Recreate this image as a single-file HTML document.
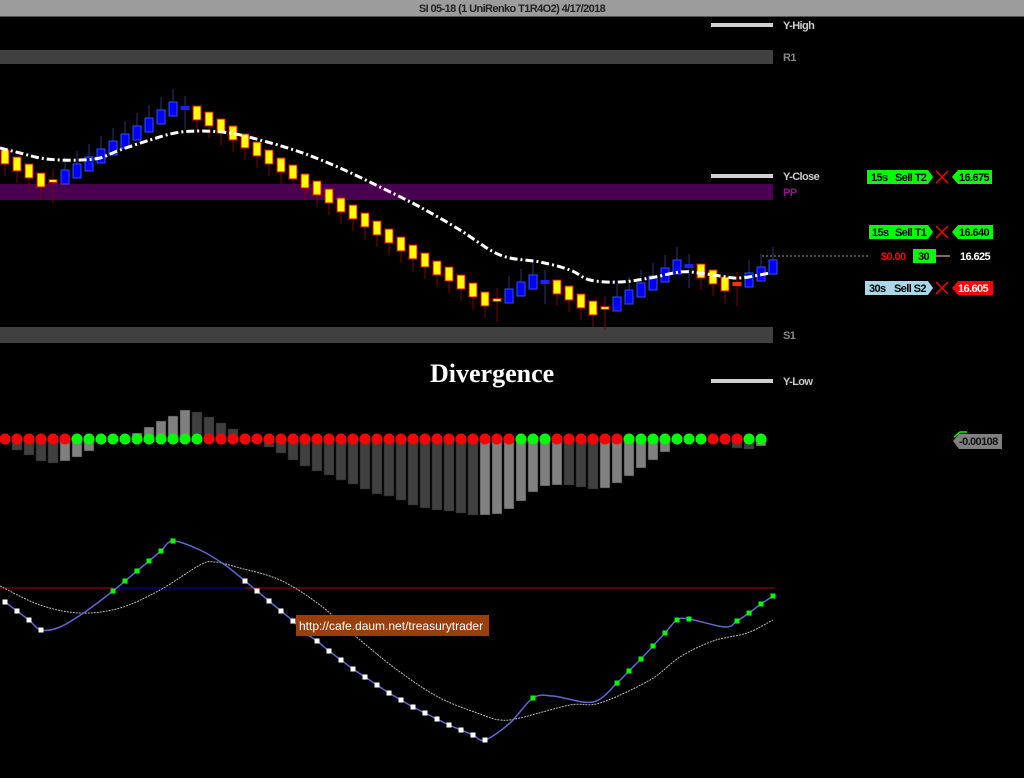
<!DOCTYPE html>
<html><head><meta charset="utf-8"><style>
html,body{margin:0;padding:0;background:#000;width:1024px;height:778px;overflow:hidden}
svg{display:block}
.lb{font-family:"Liberation Sans",sans-serif;font-weight:bold;font-size:11px;letter-spacing:-0.6px}
</style></head><body>
<svg id="s" width="1024" height="778" viewBox="0 0 1024 778" xmlns="http://www.w3.org/2000/svg">
<rect width="1024" height="778" fill="#000"/>
<rect x="0" y="0" width="1024" height="16" fill="#9c9c9c"/>
<rect x="0" y="16" width="1024" height="1" fill="#555"/>
<text x="512" y="12" text-anchor="middle" class="lb" fill="#222" font-size="11">SI 05-18 (1 UniRenko T1R4O2)  4/17/2018</text>
<rect x="0" y="50" width="773" height="14" fill="#404040"/>
<rect x="0" y="327" width="773" height="16" fill="#404040"/>
<rect x="0" y="184" width="773" height="16" fill="#4a0050"/>
<rect x="711" y="23" width="62" height="4" fill="#d0d0d0"/>
<rect x="711" y="174" width="62" height="4" fill="#d0d0d0"/>
<rect x="711" y="379" width="62" height="4" fill="#d0d0d0"/>
<g class="lb">
<text x="783" y="29" fill="#ccc">Y-High</text>
<text x="783" y="61" fill="#888">R1</text>
<text x="783" y="180" fill="#ccc">Y-Close</text>
<text x="783" y="196" fill="#8a1a8a">PP</text>
<text x="783" y="339" fill="#888">S1</text>
<text x="783" y="385" fill="#ccc">Y-Low</text>
</g>
<g id="cand"></g>
<path id="ma" fill="none" stroke="#fff" stroke-width="3" stroke-dasharray="8 3 2 3"/>
<line x1="762" y1="256" x2="868" y2="256" stroke="#999" stroke-dasharray="2 2"/>
<g class="lb">
<rect x="867" y="170" width="26" height="14" fill="#00ff00"/><text x="871" y="181" fill="#000">15s</text>
<polygon points="893,170 928,170 933,177 928,184 893,184" fill="#00ff00"/><text x="895" y="181" fill="#000">Sell T2</text>
<path d="M936,171 L948,183 M948,171 L936,183" stroke="#f00" stroke-width="1.5"/>
<polygon points="952,177 958,170 992,170 992,184 958,184" fill="#00ff00"/><text x="959" y="181" fill="#000">16.675</text>

<rect x="869" y="225" width="25" height="14" fill="#00ff00"/><text x="872" y="236" fill="#000">15s</text>
<polygon points="894,225 928,225 933,232 928,239 894,239" fill="#00ff00"/><text x="895" y="236" fill="#000">Sell T1</text>
<path d="M936,226 L948,238 M948,226 L936,238" stroke="#f00" stroke-width="1.5"/>
<polygon points="952,232 958,225 993,225 993,239 958,239" fill="#00ff00"/><text x="959" y="236" fill="#000">16.640</text>

<text x="881" y="260" fill="#f00">$0.00</text>
<rect x="913" y="249" width="23" height="14" fill="#00ff00"/><text x="918" y="260" fill="#000">30</text>
<line x1="936" y1="256" x2="950" y2="256" stroke="#b09070" stroke-width="1.5"/>
<text x="960" y="260" fill="#fff">16.625</text>

<rect x="865" y="281" width="28" height="14" fill="#a8d8ea"/><text x="869" y="292" fill="#000">30s</text>
<polygon points="893,281 928,281 933,288 928,295 893,295" fill="#a8d8ea"/><text x="894" y="292" fill="#000">Sell S2</text>
<path d="M936,282 L948,294 M948,282 L936,294" stroke="#f00" stroke-width="1.5"/>
<polygon points="952,288 958,281 993,281 993,295 958,295" fill="#ff0000"/><text x="958" y="292" fill="#fff">16.605</text>

<polygon points="953,441 959,434 1002,434 1002,449 959,449" fill="#808080"/><text x="959" y="445" fill="#111">-0.00108</text>
<path d="M954,437 L960,432 L967,432" stroke="#00ff00" stroke-width="1.5" fill="none"/>
</g>
<text x="430" y="382" font-family="'Liberation Serif',serif" font-weight="bold" font-size="26" fill="#fff">Divergence</text>
<g id="hist"></g>
<line x1="0" y1="588" x2="775" y2="588" stroke="#b00000" stroke-width="1"/>
<line x1="113" y1="588" x2="245" y2="588" stroke="#0000b0" stroke-width="1"/>
<path id="sig" fill="none" stroke="#bbb" stroke-width="1" stroke-dasharray="2 1"/>
<g id="osc"></g>
<rect x="296" y="615" width="193" height="21" fill="#9a3e0c"/>
<text x="299" y="630" font-family="'Liberation Sans',sans-serif" font-size="12" fill="#fff">http://cafe.daum.net/treasurytrader</text>
</svg>
<script>
var NS="http://www.w3.org/2000/svg";
function el(p,t,a){var e=document.createElementNS(NS,t);for(var k in a)e.setAttribute(k,a[k]);p.appendChild(e);return e;}
function cr(pts){var d='M'+pts[0][0]+','+pts[0][1];for(var i=0;i<pts.length-1;i++){var p0=pts[i-1]||pts[i],p1=pts[i],p2=pts[i+1],p3=pts[i+2]||p2;
d+=' C'+(p1[0]+(p2[0]-p0[0])/6)+','+(p1[1]+(p2[1]-p0[1])/6)+' '+(p2[0]-(p3[0]-p1[0])/6)+','+(p2[1]-(p3[1]-p1[1])/6)+' '+p2[0]+','+p2[1];}return d;}
document.getElementById('ma').setAttribute('d',cr([[0,148],[20,153],[40,158],[60,160],[80,160],[100,158],[120,150],[150,140],[175,133],[200,131],[230,133],[260,140],[300,152],[340,168],[380,187],[420,207],[460,230],[490,250],[510,258],[540,262],[570,270],[590,280],[620,282],[650,278],[680,272],[700,273],[720,276],[740,278],[770,273]]));
document.getElementById('sig').setAttribute('d',cr([[0,586],[40,605],[80,613],[120,608],[160,590],[200,565],[215,562],[240,568],[280,580],[320,605],[360,640],[400,672],[440,698],[480,714],[500,720],[520,718],[570,705],[600,703],[650,680],[680,657],[713,641],[747,633],[773,620]]));
var c=document.getElementById('cand');
var C=[[157,'y'],[164,'y'],[171,'y'],[180,'y'],[181,'dy'],[177,'b'],[171,'b'],[164,'b'],[156,'b'],[148,'b'],[141,'b'],[133,'b'],[125,'b'],[117,'b'],[109,'b'],[108,'db'],
[113,'y'],[119,'y'],[126,'y'],[133,'y'],[141,'y'],[149,'y'],[157,'y'],[165,'y'],[172,'y'],[181,'y'],[188,'y'],[196,'y'],[205,'y'],[212,'y'],[220,'y'],[228,'y'],
[236,'y'],[244,'y'],[252,'y'],[260,'y'],[268,'y'],[274,'y'],[282,'y'],[290,'y'],[299,'y'],[300,'dy'],[296,'b'],[289,'b'],[282,'b'],[282,'db'],[287,'y'],[293,'y'],[301,'y'],[308,'y'],[308,'dy'],
[304,'b'],[297,'b'],[290,'b'],[283,'b'],[275,'b'],[267,'b'],[266,'db'],[271,'y'],[277,'y'],[284,'y'],[284,'dr'],[280,'b'],[274,'b'],[267,'b']];
C.forEach(function(d,i){var x=5+12*i,y=d[0],t=d[1];
 if(t=='y'){el(c,'line',{x1:x,y1:y,x2:x,y2:y+19,stroke:'#800000'});el(c,'rect',{x:x-4,y:y-7,width:8,height:14,fill:'#ffff00',stroke:'#e00000','stroke-width':1});}
 else if(t=='b'){el(c,'line',{x1:x,y1:y-20,x2:x,y2:y+3,stroke:'#303070'});el(c,'rect',{x:x-4,y:y-7,width:8,height:14,fill:'#0000ff',stroke:'#3050ff','stroke-width':1});}
 else{var col=t=='dy'?'#ffff00':(t=='db'?'#2020ff':'#ff3000');el(c,'line',{x1:x,y1:y-12,x2:x,y2:y+22,stroke:t=='db'?'#303070':'#800000'});el(c,'rect',{x:x-4,y:y-1.5,width:8,height:3,fill:col,stroke:t=='dy'?'#e00000':col});}
});
var h=document.getElementById('hist');
var H={1:[450,'d'],2:[455,'d'],3:[461,'d'],4:[463,'d'],5:[461,'l'],6:[457,'l'],7:[451,'l'],
11:[433,'l'],12:[427,'l'],13:[421,'l'],14:[416,'l'],15:[410,'l'],16:[412,'d'],17:[417,'d'],18:[423,'d'],19:[429,'d'],
22:[447,'d'],23:[453,'d'],24:[460,'d'],25:[466,'d'],26:[471,'d'],27:[475,'d'],28:[480,'d'],29:[484,'d'],30:[489,'d'],31:[494,'d'],32:[496,'d'],33:[500,'d'],34:[505,'d'],35:[508,'d'],36:[510,'d'],37:[511,'d'],38:[513,'d'],39:[515,'d'],40:[515,'l'],41:[514,'l'],42:[509,'l'],
43:[501,'l'],44:[492,'l'],45:[486,'l'],46:[485,'l'],47:[485,'d'],48:[487,'d'],49:[489,'d'],50:[488,'l'],51:[483,'l'],52:[476,'l'],53:[468,'l'],54:[460,'l'],55:[452,'l'],61:[448,'d'],62:[449,'d'],63:[446,'l']};
for(var k in H){var i=+k,x=5+12*i,v=H[k][0],col=H[k][1]=='d'?'#404040':'#808080';
 var y1=Math.min(v,439),y2=Math.max(v,439);el(h,'rect',{x:x-5,y:y1,width:10,height:y2-y1,fill:col,stroke:'#222','stroke-width':0.5});}
var G=[];for(var i=6;i<=16;i++)G.push(i);G=G.concat([43,44,45,52,53,54,55,56,57,58,62,63]);
for(var i=0;i<64;i++){el(h,'circle',{cx:5+12*i,cy:439,r:5.5,fill:G.indexOf(i)>=0?'#00ff00':'#ff0000'});}
var o=document.getElementById('osc');
var P=[[5,602,'w'],[17,611,'w'],[29,620,'w'],[41,630,'w'],[60,627,''],[85,612,''],[113,591,'g'],[125,581,'g'],[137,571,'g'],[149,561,'g'],[161,551,'g'],[173,541,'g'],[200,550,''],[225,565,''],
[245,581,'w'],[257,591,'w'],[269,601,'w'],[281,611,'w'],[293,621,'w'],[304,632,'o'],[317,641,'w'],[329,651,'w'],[341,660,'w'],[353,669,'w'],[365,677,'w'],[377,685,'w'],[389,693,'w'],[401,700,'w'],[413,707,'w'],[425,713,'w'],[437,719,'w'],[449,725,'w'],[461,730,'w'],[473,735,'w'],[485,740,'w'],
[510,723,''],[533,698,'g'],[553,696,''],[593,702,''],[617,683,'g'],[629,671,'g'],[641,659,'g'],[653,646,'g'],[665,633,'g'],[677,620,'g'],[689,619,'g'],[725,627,''],[737,621,'g'],[749,613,'g'],[761,604,'g'],[773,596,'g']];
el(o,'path',{d:cr(P),fill:'none',stroke:'#6068d0','stroke-width':1.5});
P.forEach(function(p){if(!p[2])return;var col={w:'#fff',g:'#00ff00',o:'#ff9060'}[p[2]];el(o,'rect',{x:p[0]-2.5,y:p[1]-2.5,width:5,height:5,fill:col});});
</script>
</body></html>
